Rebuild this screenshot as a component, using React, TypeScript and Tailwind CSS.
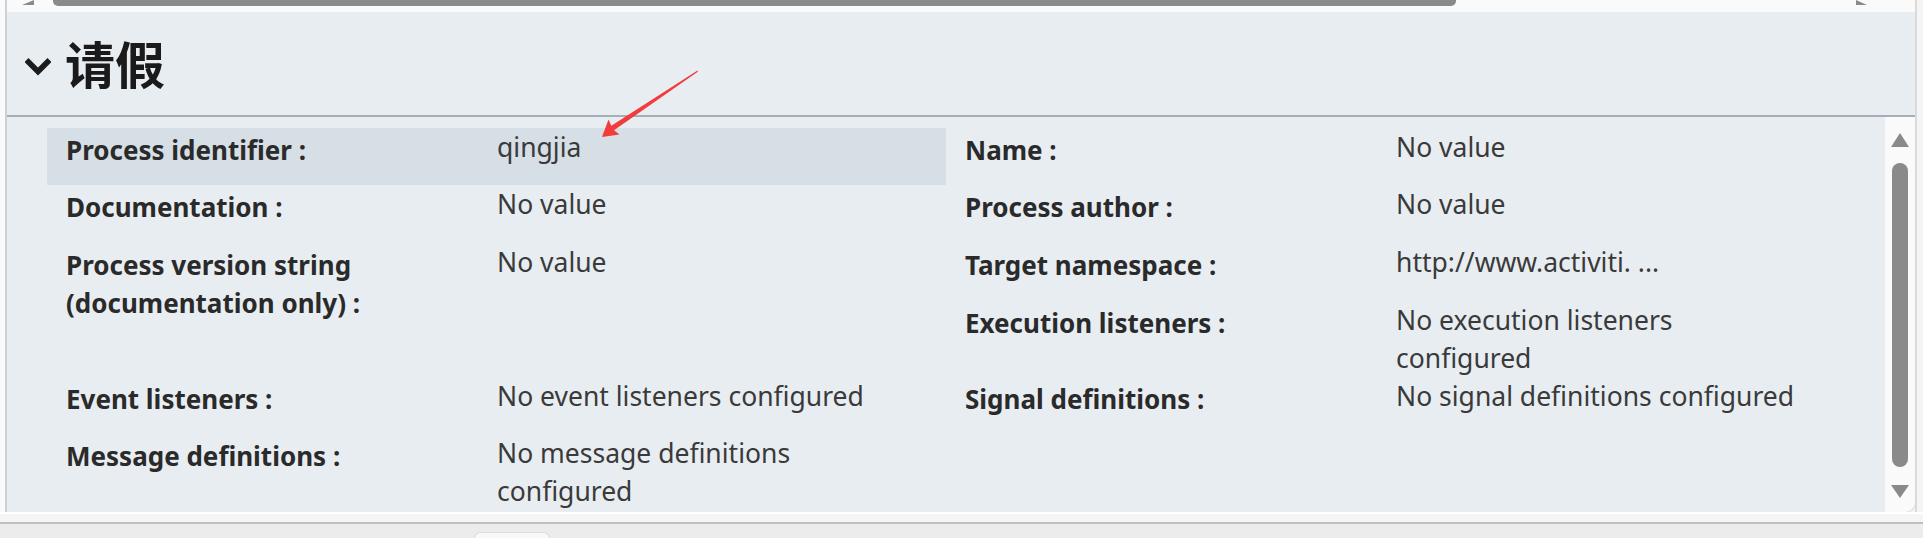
import React from "react";

type Item = { label: React.ReactNode; value: React.ReactNode; cls: string; hl?: boolean };

const leftItems: Item[] = [
  { label: "Process identifier :", value: "qingjia", cls: "row-start-1", hl: true },
  { label: "Documentation :", value: "No value", cls: "row-start-2" },
  {
    label: (
      <>
        Process version string
        <br />
        (documentation only) :
      </>
    ),
    value: "No value",
    cls: "row-start-3 row-span-2",
  },
  { label: "Event listeners :", value: "No event listeners configured", cls: "row-start-5" },
  {
    label: "Message definitions :",
    value: (
      <>
        No message definitions
        <br />
        configured
      </>
    ),
    cls: "row-start-6",
  },
];

const rightItems: Item[] = [
  { label: "Name :", value: "No value", cls: "row-start-1" },
  { label: "Process author :", value: "No value", cls: "row-start-2" },
  { label: "Target namespace :", value: "http://www.activiti. ...", cls: "row-start-3" },
  {
    label: "Execution listeners :",
    value: (
      <>
        No execution listeners
        <br />
        configured
      </>
    ),
    cls: "row-start-4",
  },
  { label: "Signal definitions :", value: "No signal definitions configured", cls: "row-start-5" },
];

function Cell({ item, col }: { item: Item; col: "l" | "r" }) {
  return (
    <div
      className={`${item.cls} ${col === "l" ? "col-start-1" : "col-start-2"} flex items-start pl-[19px] ${
        item.hl ? "bg-[#d6dee6]" : ""
      }`}
    >
      <div className="w-[431px] shrink-0 pt-[3px] text-[26px] leading-[38px] font-bold text-[#2a2a2a] whitespace-nowrap">
        {item.label}
      </div>
      <div className="text-[26.5px] leading-[38px] text-[#3a3a3a] whitespace-nowrap">{item.value}</div>
    </div>
  );
}

export default function App() {
  return (
    <div className="relative w-[1923px] h-[538px] overflow-hidden bg-[#f5f5f5] font-['Noto_Sans','Noto_Sans_CJK_SC',sans-serif]">
      <div className="flex h-[512px]">
        <div className="w-[5px] bg-[#fafafa]" />
        <div className="w-[2px] bg-[#cdd1d6]" />
        <div className="w-[1908px] flex flex-col">
          {/* top horizontal scrollbar remnant */}
          <div className="h-[12px] bg-[#fafafa] flex items-start">
            <div className="ml-[15px] w-0 h-0 border-t-[5px] border-t-transparent border-r-[12px] border-r-[#8a8a8a]" />
            <div className="ml-[19px] w-[1403px] h-[6px] bg-[#8a8a8a] rounded-b-[5px]" />
            <div className="ml-[400px] w-0 h-0 border-t-[5px] border-t-transparent border-l-[11px] border-l-[#8a8a8a]" />
          </div>
          {/* header */}
          <div className="h-[103px] bg-[#e8edf2] flex items-center pl-[18px]">
            <svg width="26" height="18" viewBox="0 0 26 18" className="mt-[6px]">
              <path d="M3.5 4 L13 13.5 L22.5 4" fill="none" stroke="#1c1c1c" strokeWidth="5.5" strokeLinecap="square" />
            </svg>
            <div className="ml-[14px] text-[50px] leading-none font-bold text-[#1a1a1a] font-['Noto_Sans_CJK_SC',sans-serif] pb-[4px]">
              请假
            </div>
          </div>
          <div className="h-[2px] bg-[#a7aeb9]" />
          {/* content */}
          <div className="flex-1 flex overflow-hidden">
            <div className="flex-1 bg-[#e8edf2] overflow-hidden pt-[11px] pl-[40px]">
              <div className="grid grid-cols-[899px_899px] grid-rows-[57px_58px_58px_76px_57px_auto]">
                {leftItems.map((it, i) => (
                  <Cell key={"l" + i} item={it} col="l" />
                ))}
                {rightItems.map((it, i) => (
                  <Cell key={"r" + i} item={it} col="r" />
                ))}
              </div>
            </div>
            <div className="w-[30px] bg-[#fafafa] rounded-br-[10px] flex flex-col items-center pt-[16px] pb-[14px] shadow-[1px_1px_1px_rgba(0,0,0,0.08)]">
              <div className="w-0 h-0 border-l-[9px] border-l-transparent border-r-[9px] border-r-transparent border-b-[14px] border-b-[#8a8a8a]" />
              <div className="mt-[16px] w-[16px] flex-1 bg-[#8a8a8a] rounded-full" />
              <div className="mt-[18px] w-0 h-0 border-l-[9px] border-l-transparent border-r-[9px] border-r-transparent border-t-[13px] border-t-[#8a8a8a]" />
            </div>
          </div>
        </div>
        <div className="w-[2px] bg-[#dadada]" />
        <div className="flex-1 bg-[#f5f5f5]" />
      </div>
      {/* bottom area */}
      <div className="h-[2px] bg-[#ffffff]" />
      <div className="h-[8px] bg-[#f5f5f5]" />
      <div className="h-[2px] bg-[#bfbfbf]" />
      <div className="h-[14px] bg-[#ececec] flex items-end">
        <div className="ml-[474px] w-[76px] h-[6px] bg-[#f8f8f8] border border-b-0 border-[#dcdcdc] rounded-t-[7px]" />
      </div>
      {/* red annotation arrow */}
      <svg className="absolute left-0 top-0 pointer-events-none" width="1923" height="538" viewBox="0 0 1923 538">
        <polygon
          points="602,137 608.5,119.5 611.3,125.8 697.5,70.5 697.8,71.8 614,130.3 619.5,134.5"
          fill="#f23b3b"
        />
      </svg>
    </div>
  );
}
